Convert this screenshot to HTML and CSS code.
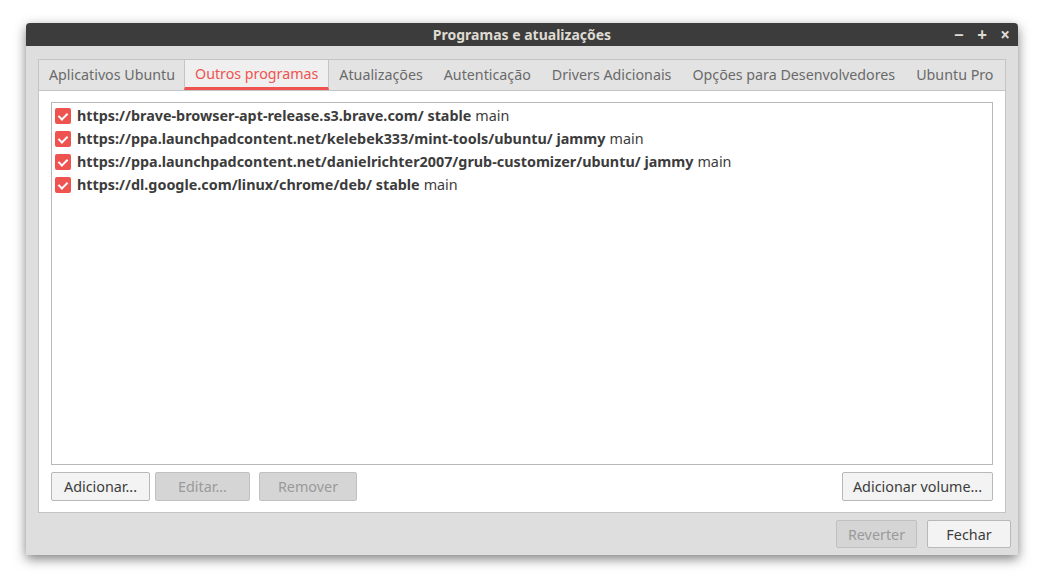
FILE: index.html
```html
<!DOCTYPE html>
<html lang="pt">
<head>
	<meta charset="UTF-8">
	<title>Programas e atualizações</title>
	<link rel="stylesheet" href="styles.css">
</head>
<body>
	<div class="window">
		<div class="titlebar">
			<span class="title">Programas e atualizações</span>
			<div class="controls">
				<span class="ctl">&minus;</span>
				<span class="ctl">+</span>
				<span class="ctl">&times;</span>
			</div>
		</div>
		<div class="body">
			<div class="notebook">
				<div class="tabs">
					<span class="tab">Aplicativos Ubuntu</span>
					<span class="tab active">Outros programas</span>
					<span class="tab">Atualizações</span>
					<span class="tab">Autenticação</span>
					<span class="tab">Drivers Adicionais</span>
					<span class="tab">Opções para Desenvolvedores</span>
					<span class="tab">Ubuntu Pro</span>
				</div>
				<div class="page">
					<div class="list">
						<div class="row"><span class="check"></span><b>https://brave-browser-apt-release.s3.brave.com/ stable</b> main</div>
						<div class="row"><span class="check"></span><b>https://ppa.launchpadcontent.net/kelebek333/mint-tools/ubuntu/ jammy</b> main</div>
						<div class="row"><span class="check"></span><b>https://ppa.launchpadcontent.net/danielrichter2007/grub-customizer/ubuntu/ jammy</b> main</div>
						<div class="row"><span class="check"></span><b>https://dl.google.com/linux/chrome/deb/ stable</b> main</div>
					</div>
					<div class="actions">
						<button class="btn add">Adicionar...</button>
						<button class="btn edit" disabled>Editar...</button>
						<button class="btn remove" disabled>Remover</button>
						<span class="spacer"></span>
						<button class="btn volume">Adicionar volume...</button>
					</div>
				</div>
			</div>
			<div class="dialog-buttons">
				<button class="btn revert" disabled>Reverter</button>
				<button class="btn close">Fechar</button>
			</div>
		</div>
	</div>
</body>
</html>
```

FILE: styles.css
```css
*{
	padding: 0;
	margin: 0;
	box-sizing: border-box;
}
body{
	background: #fff;
	font-family: "Noto Sans", "Open Sans", sans-serif;
	font-size: 14.35px;
	color: #3c3c3c;
	padding: 23px 0 0 26px;
	height: 584px;
}
.window{
	width: 992px;
	height: 532px;
	background: #dedede;
	border-radius: 4px 4px 0 0;
	box-shadow: 0 4px 12px rgba(0,0,0,0.5);
	display: flex;
	flex-direction: column;
}
.titlebar{
	height: 24px;
	background: #3c3c3c;
	border-radius: 4px 4px 0 0;
	display: flex;
	align-items: center;
	justify-content: center;
	position: relative;
}
.title{
	color: #dfdbd2;
	font-weight: bold;
	font-size: 14px;
}
.controls{
	position: absolute;
	right: 5px;
	top: 0;
	height: 24px;
	display: flex;
	align-items: center;
	gap: 7px;
}
.ctl{
	color: #dfdbd2;
	font-weight: bold;
	font-size: 17px;
	width: 16px;
	text-align: center;
	line-height: 24px;
}
.body{
	flex: 1;
	padding: 13px 12px 7px 12px;
	display: flex;
	flex-direction: column;
}
.notebook{
	width: 968px;
	height: 454px;
	border: 1px solid #c4c4c4;
	background: #fff;
	display: flex;
	flex-direction: column;
}
.tabs{
	height: 31px;
	background: #e3e3e3;
	border-bottom: 1px solid #c4c4c4;
	display: flex;
	font-size: 14.25px;
}
.tab{
	padding: 0 10px 0 10px;
	line-height: 30px;
	color: #6a6a6a;
	white-space: nowrap;
	margin-right: 1px;
}
.tab.active{
	background: #efefef;
	color: #ef5350;
	border-left: 1px solid #c4c4c4;
	border-right: 1px solid #c4c4c4;
	border-bottom: 3px solid #ef5350;
	padding: 0 10px;
	line-height: 28px;
	margin-left: -2px;
	margin-right: 0;
}
.page{
	flex: 1;
	padding: 11px 12px 11px 12px;
	display: flex;
	flex-direction: column;
}
.list{
	flex: 1;
	border: 1px solid #b8b8b8;
	padding: 1px 3px 0 3px;
}
.row{
	height: 23px;
	display: flex;
	align-items: center;
	white-space: nowrap;
	color: #3c3c3c;
}
.row b{
	margin-right: 4px;
}
.check{
	width: 16px;
	height: 16px;
	border-radius: 2px;
	background: #ef5350;
	margin-right: 6px;
	position: relative;
	flex: none;
}
.check::after{
	content: "";
	position: absolute;
	left: 5px;
	top: 3px;
	width: 4px;
	height: 7px;
	border: solid #fff;
	border-width: 0 2px 2px 0;
	transform: rotate(45deg);
}
.actions{
	margin-top: 7px;
	display: flex;
	gap: 5px;
}
.spacer{
	flex: 1;
}
.btn{
	height: 29px;
	font-family: inherit;
	font-size: 14.35px;
	color: #3c3c3c;
	background: #f3f3f3;
	border: 1px solid #b8b8b8;
	border-radius: 2px;
	padding: 0 8px;
}
.btn:disabled{
	background: #d5d5d5;
	color: #9a9a9a;
	border-color: #c0c0c0;
}
.add{ width: 99px; }
.edit{ width: 95px; }
.remove{ width: 98px; margin-left: 4px; }
.volume{ width: 151px; }
.dialog-buttons{
	margin-top: 7px;
	display: flex;
	justify-content: flex-end;
	gap: 10px;
	margin-right: -5px;
}
.revert{ width: 81px; height: 28px; }
.close{ width: 84px; height: 28px; }
```
